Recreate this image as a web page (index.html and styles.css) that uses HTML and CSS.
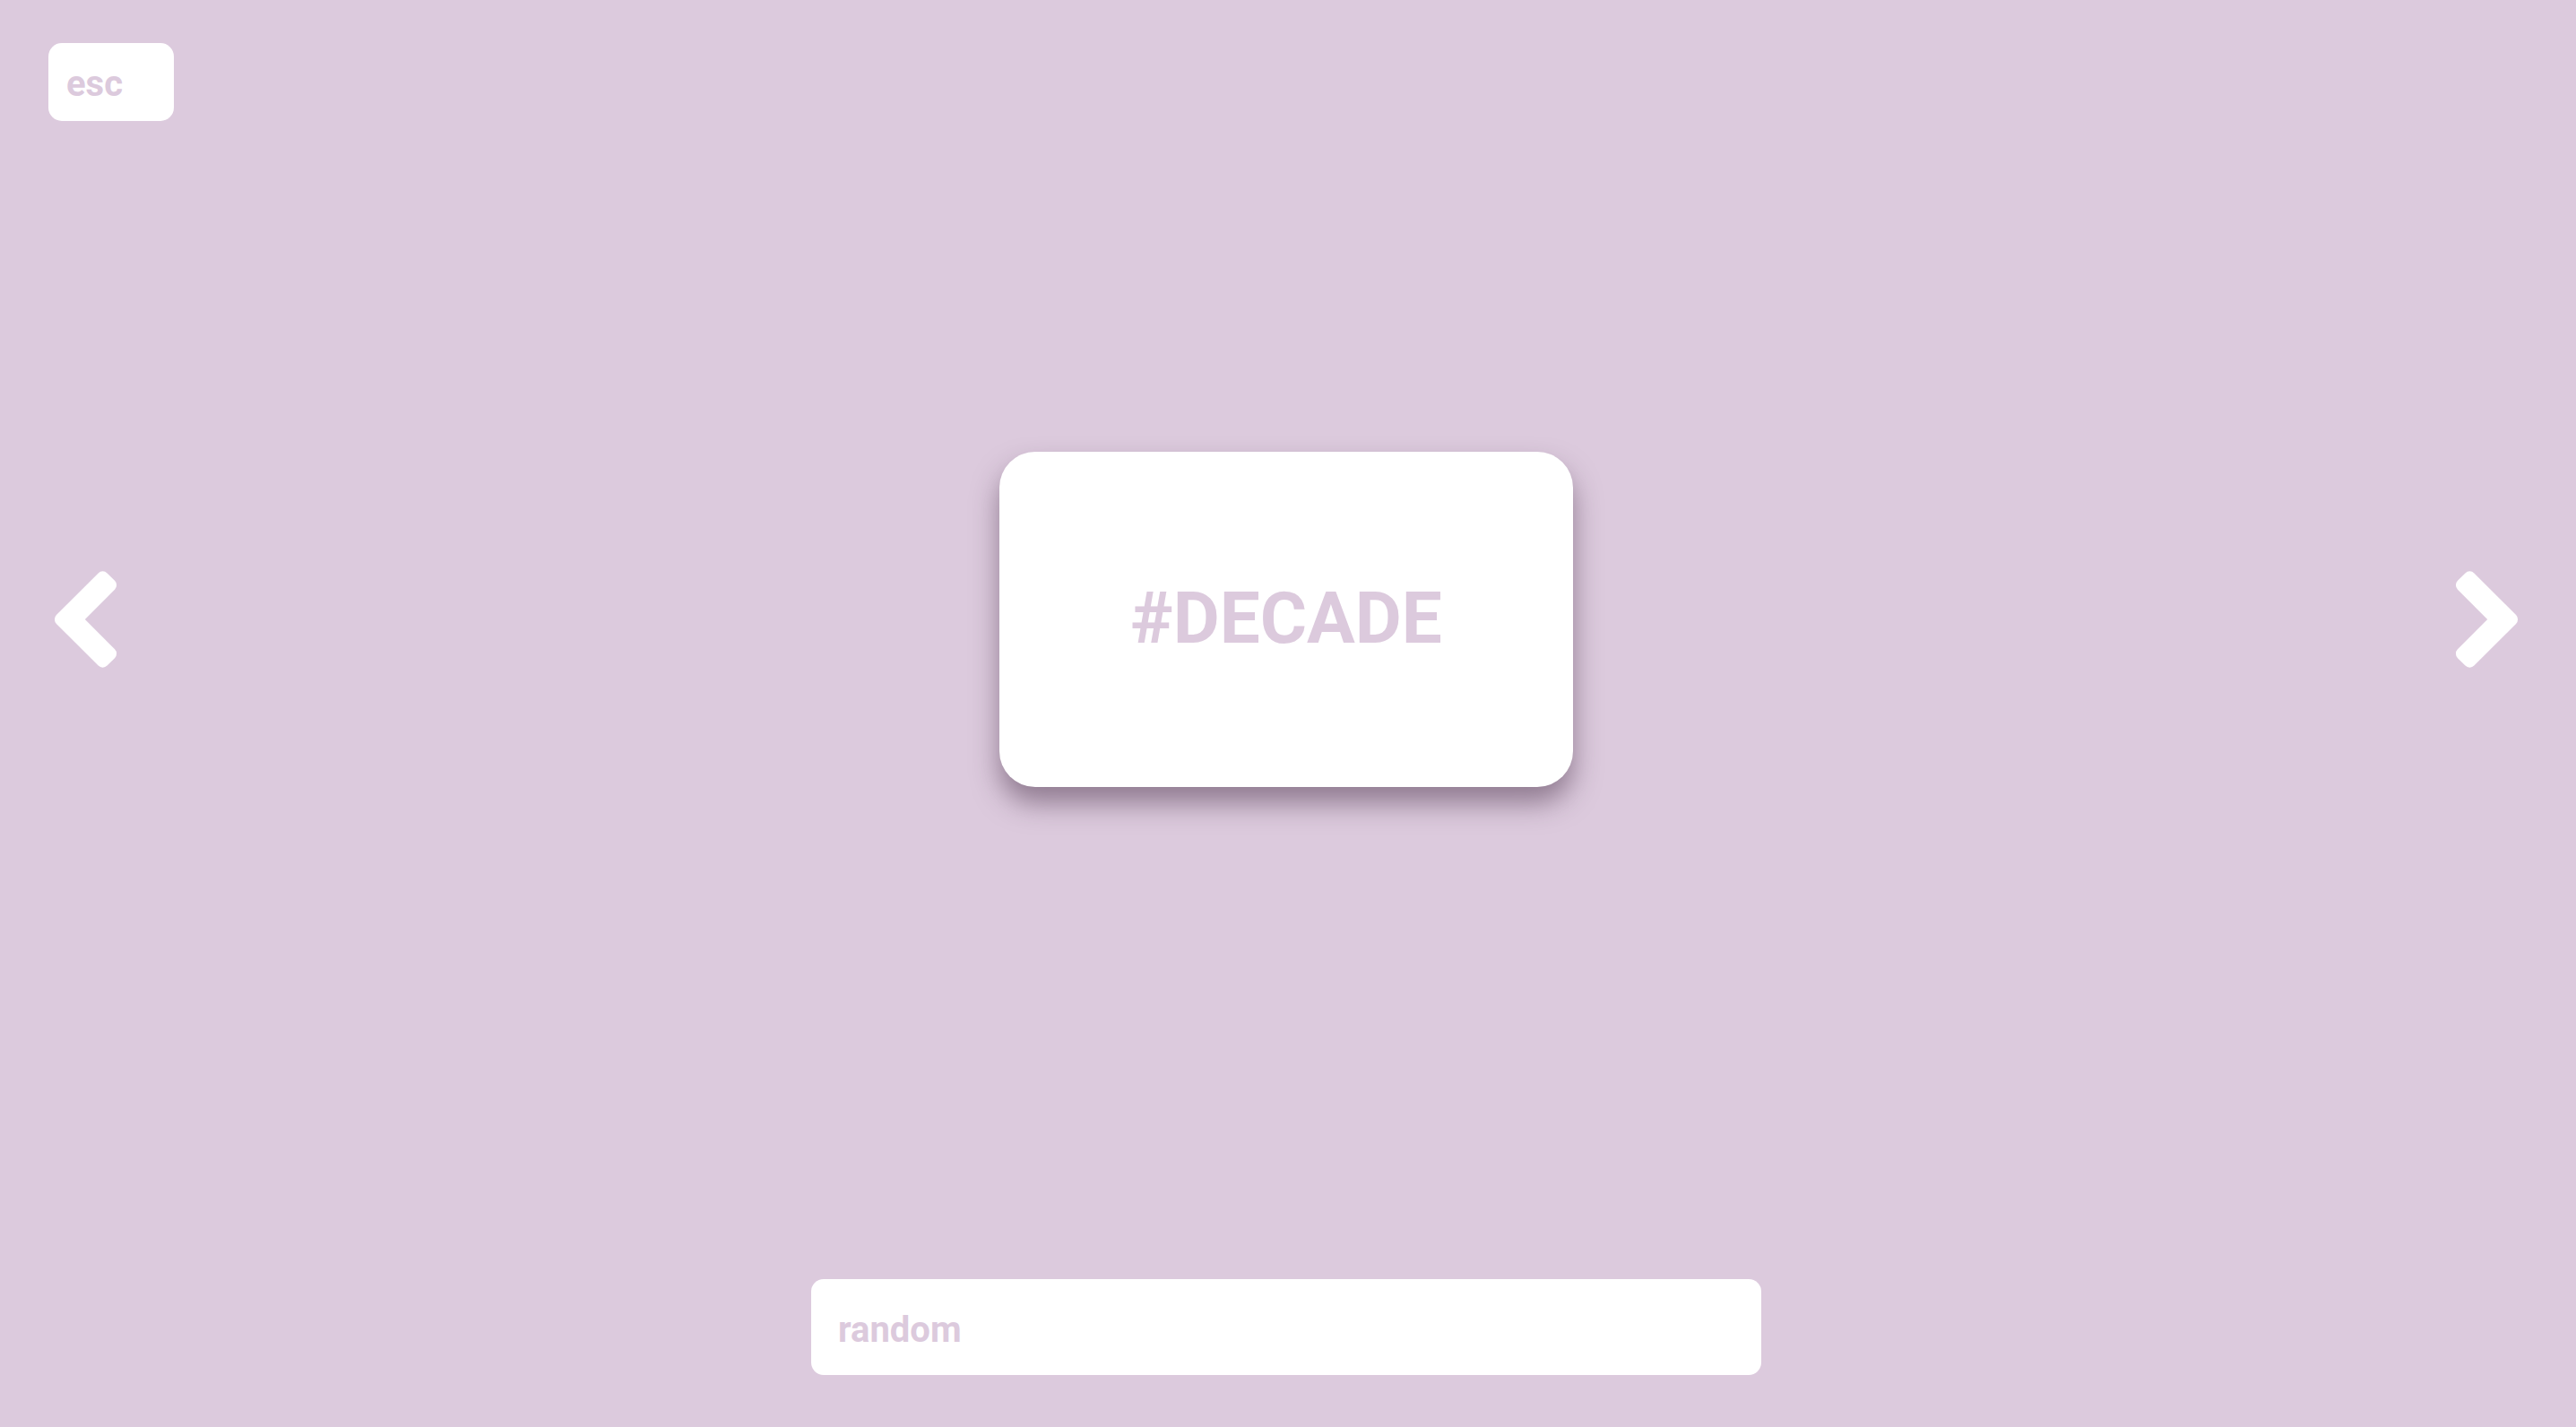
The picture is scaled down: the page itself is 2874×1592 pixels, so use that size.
FILE: index.html
```html
<!DOCTYPE html>
<html lang="en">
<head>
<meta charset="utf-8">
<title>Decade</title>
<link rel="stylesheet" href="styles.css">
</head>
<body>
  <header class="top">
    <button class="esc">esc</button>
  </header>
  <main class="stage">
    <button class="nav prev" aria-label="previous">
      <svg width="80" height="120" viewBox="-2 0 80 120">
        <polygon points="11.91,60 58.59,13.33 67.07,21.81 28.89,60 67.07,98.19 58.59,106.67" fill="#fff" stroke="#fff" stroke-width="14" stroke-linejoin="round"/>
      </svg>
    </button>
    <div class="card"><span class="word">#DECADE</span></div>
    <button class="nav next" aria-label="next">
      <svg width="80" height="120" viewBox="2 0 80 120">
        <polygon points="68.09,60 21.41,13.33 12.93,21.81 51.11,60 12.93,98.19 21.41,106.67" fill="#fff" stroke="#fff" stroke-width="14" stroke-linejoin="round"/>
      </svg>
    </button>
  </main>
  <footer class="bottom">
    <input class="search" type="text" value="random">
  </footer>
</body>
</html>
```

FILE: styles.css
```css
html, body {
  margin: 0;
  height: 100%;
}

body {
  background: #dccadd;
  font-family: Roboto, "Liberation Sans", sans-serif;
  padding: 0 58px 0 54px;
  box-sizing: border-box;
  overflow: hidden;
}

.top {
  padding-top: 48px;
  display: flex;
}

.esc {
  width: 140px;
  height: 87px;
  border: none;
  border-radius: 15px;
  background: #fff;
  color: #dccadd;
  font-family: Roboto, "Liberation Sans", sans-serif;
  font-weight: 700;
  font-size: 40px;
  text-align: left;
  padding: 4px 0 0 20px;
  display: flex;
  align-items: center;
  cursor: pointer;
}

.stage {
  margin-top: 369px;
  display: flex;
  align-items: center;
  justify-content: space-between;
}

.nav {
  width: 80px;
  height: 120px;
  padding: 0;
  border: none;
  background: none;
  display: block;
  cursor: pointer;
}

.nav svg {
  display: block;
}

.card {
  width: 640px;
  height: 374px;
  background: #fff;
  border-radius: 40px;
  box-shadow: 0 18px 30px rgba(70, 45, 70, 0.5);
  display: flex;
  align-items: center;
  justify-content: center;
}

.word {
  color: #dccadd;
  font-weight: 700;
  font-size: 80px;
  line-height: 1;
  padding-bottom: 2px;
}

.bottom {
  margin-top: 549px;
  display: flex;
  justify-content: center;
}

.search {
  width: 1060px;
  height: 107px;
  box-sizing: border-box;
  border: none;
  border-radius: 14px;
  background: #fff;
  color: #dccadd;
  font-family: Roboto, "Liberation Sans", sans-serif;
  font-weight: 700;
  font-size: 40px;
  padding: 6px 0 0 30px;
  outline: none;
}
```
